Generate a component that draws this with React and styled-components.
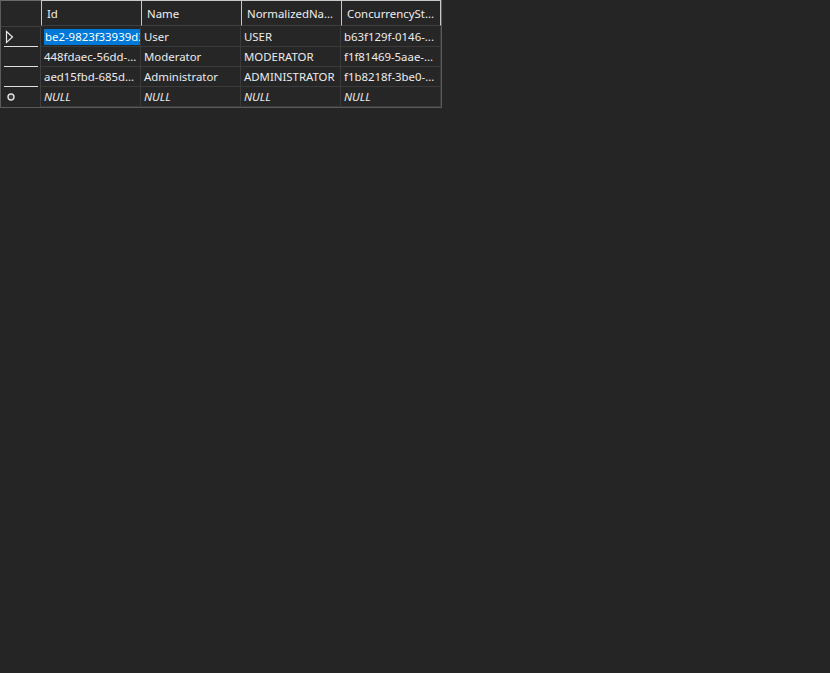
import React from "react";
import styled, { createGlobalStyle } from "styled-components";

const Global = createGlobalStyle`
  html, body { margin: 0; padding: 0; background: #252526; }
  body { font-family: "Segoe UI", "Noto Sans", "Liberation Sans", sans-serif; }
`;

const Page = styled.div`
  width: 830px;
  height: 673px;
  background: #252526;
`;

const Grid = styled.div`
  display: grid;
  grid-template-columns: 40px repeat(4, 100px);
  width: max-content;
  border: 1px solid #5a5a5a;
  border-top-color: #6a6a6a;
  background: #262626;
`;

const Corner = styled.div`
  height: 25px;
  background: #262626;
  border-bottom: 1px solid #3e3e3e;
`;

const HeadCell = styled.div`
  box-sizing: border-box;
  border-left: 1px solid #c8c8c8;
  border-top: 1px solid #c8c8c8;
  border-bottom: 1px solid #3e3e3e;
  ${(p) => (p.$last ? "border-right: 1px solid #c8c8c8;" : "")}
  margin-top: -1px;
  height: 26px;
  padding-left: 5px;
  display: flex;
  align-items: center;
  color: #f0f0f0;
  font-size: 11.4px;
  white-space: nowrap;
  overflow: hidden;
`;

const RowHead = styled.div`
  height: 20px;
  position: relative;
  display: flex;
  align-items: center;
  padding-left: 4px;
  box-sizing: border-box;
  border-right: 1px solid #3e3e3e;
  &::after {
    content: "";
    display: ${(p) => (p.$line ? "block" : "none")};
    position: absolute;
    left: 3px;
    right: 2px;
    bottom: 0;
    height: 1px;
    background: #e0e0e0;
  }
`;

const Cell = styled.div`
  box-sizing: border-box;
  height: 20px;
  border-right: 1px solid #3a3a3a;
  border-bottom: 1px solid #3a3a3a;
  padding-left: 3px;
  display: flex;
  align-items: center;
  color: #ececec;
  font-size: 11.4px;
  font-style: ${(p) => (p.$null ? "italic" : "normal")};
  white-space: nowrap;
  overflow: hidden;
  text-overflow: clip;
`;

const Selected = styled.span`
  background: #0078d7;
  color: #ffffff;
  line-height: 16px;
  padding: 0 1px;
  white-space: nowrap;
`;

const Arrow = () => (
  <svg width="9" height="14" viewBox="0 0 9 14">
    <path d="M1.5 1.5 L7.5 7 L1.5 12.5 Z" fill="none" stroke="#e8e8e8" strokeWidth="1.2" />
  </svg>
);

const NewRow = () => (
  <svg width="10" height="10" viewBox="0 0 10 10" style={{ marginLeft: 1 }}>
    <circle cx="5" cy="5" r="3" fill="#3a3a3a" stroke="#e0e0e0" strokeWidth="1.4" />
  </svg>
);

const headers = ["Id", "Name", "NormalizedNa...", "ConcurrencySt..."];
const rows = [
  { id: null, name: "User", norm: "USER", conc: "b63f129f-0146-..." },
  { id: "448fdaec-56dd-...", name: "Moderator", norm: "MODERATOR", conc: "f1f81469-5aae-..." },
  { id: "aed15fbd-685d...", name: "Administrator", norm: "ADMINISTRATOR", conc: "f1b8218f-3be0-..." },
];

export default function App() {
  return (
    <Page>
      <Global />
      <Grid>
        <Corner />
        {headers.map((h, i) => (
          <HeadCell key={h} $last={i === headers.length - 1}>{h}</HeadCell>
        ))}
        {rows.map((r, i) => (
          <React.Fragment key={i}>
            <RowHead $line>{i === 0 ? <Arrow /> : null}</RowHead>
            <Cell>{r.id === null ? <Selected>be2-9823f33939d3</Selected> : r.id}</Cell>
            <Cell>{r.name}</Cell>
            <Cell>{r.norm}</Cell>
            <Cell>{r.conc}</Cell>
          </React.Fragment>
        ))}
        <RowHead><NewRow /></RowHead>
        <Cell $null>NULL</Cell>
        <Cell $null>NULL</Cell>
        <Cell $null>NULL</Cell>
        <Cell $null>NULL</Cell>
      </Grid>
    </Page>
  );
}
